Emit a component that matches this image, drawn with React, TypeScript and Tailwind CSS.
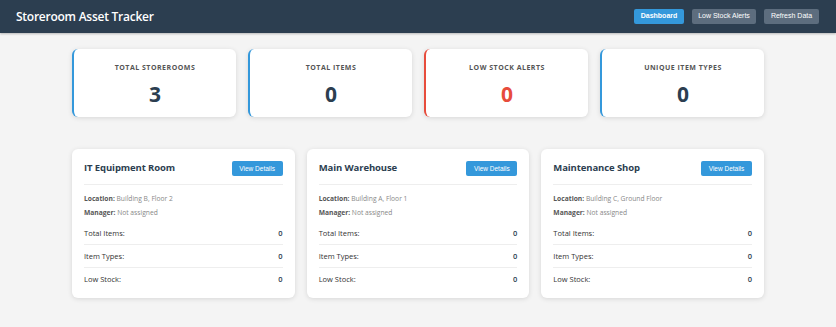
import React from "react";

const stats = [
  { label: "Total Storerooms", value: "3", danger: false },
  { label: "Total Items", value: "0", danger: false },
  { label: "Low Stock Alerts", value: "0", danger: true },
  { label: "Unique Item Types", value: "0", danger: false },
];

const rooms = [
  { name: "IT Equipment Room", location: "Building B, Floor 2" },
  { name: "Main Warehouse", location: "Building A, Floor 1" },
  { name: "Maintenance Shop", location: "Building C, Ground Floor" },
];

export default function App() {
  return (
    <div
      className="min-h-[327px] bg-[#f4f4f4]"
      style={{ fontFamily: '"Open Sans", "Noto Sans", sans-serif' }}
    >
      <header className="flex h-[33px] items-center justify-between bg-[#2c3e50] pl-4 pr-[17px] shadow-[0_1px_2px_rgba(0,0,0,0.25)]">
        <h1 className="text-[12px] font-semibold tracking-[-0.25px] text-white">Storeroom Asset Tracker</h1>
        <nav
          className="flex gap-2"
          style={{ fontFamily: '"Liberation Sans", Arial, sans-serif' }}
        >
          <button className="h-[15px] w-[50px] rounded-[2px] bg-[#3498db] text-[7px] font-bold text-white">Dashboard</button>
          <button className="h-[15px] w-[64px] rounded-[2px] bg-[#5d6d7e] text-[7px] text-white">Low Stock Alerts</button>
          <button className="h-[15px] w-[55px] rounded-[2px] bg-[#5d6d7e] text-[7px] text-white">Refresh Data</button>
        </nav>
      </header>

      <main className="mx-auto w-[692px] pt-4">
        <div className="grid grid-cols-4 gap-3">
          {stats.map((s) => (
            <div
              key={s.label}
              className={`flex h-[68px] flex-col items-center rounded-[6px] border-l-[2px] bg-white pt-[14px] shadow-[0_1px_5px_rgba(0,0,0,0.12)] ${s.danger ? "border-[#e74c3c]" : "border-[#3498db]"}`}
            >
              <div className="text-[7px] font-bold uppercase leading-[10px] tracking-[0.5px] text-[#555]">{s.label}</div>
              <div className={`mt-[9px] text-[21px] font-bold leading-[24px] ${s.danger ? "text-[#e74c3c]" : "text-[#2c3e50]"}`}>{s.value}</div>
            </div>
          ))}
        </div>

        <div className="mt-8 grid grid-cols-3 gap-3">
          {rooms.map((r) => (
            <div key={r.name} className="rounded-[6px] bg-white px-3 pb-2 pt-3 shadow-[0_1px_5px_rgba(0,0,0,0.12)]">
              <div className="flex items-center justify-between border-b border-[#eeeeee] pb-2">
                <h3 className="text-[9.5px] font-bold tracking-[-0.1px] text-[#2c3e50]">{r.name}</h3>
                <button
                  className="h-[15px] w-[51px] rounded-[2px] bg-[#3498db] text-[6.5px] text-white"
                  style={{ fontFamily: '"Liberation Sans", Arial, sans-serif' }}
                >
                  View Details
                </button>
              </div>
              <div className="mt-[9px] text-[6.7px] leading-[10px] text-[#888]">
                <p>
                  <span className="font-bold text-[#555]">Location:</span> {r.location}
                </p>
                <p className="mt-1">
                  <span className="font-bold text-[#555]">Manager:</span> Not assigned
                </p>
              </div>
              <div className="mt-[4px] text-[7.5px] text-[#333]">
                {["Total Items:", "Item Types:", "Low Stock:"].map((l, i) => (
                  <div
                    key={l}
                    className={`flex items-center justify-between py-[6px] leading-[10px] ${i < 2 ? "border-b border-[#eeeeee]" : ""}`}
                  >
                    <span>{l}</span>
                    <span className="font-semibold text-[#2c3e50]">0</span>
                  </div>
                ))}
              </div>
            </div>
          ))}
        </div>
      </main>
    </div>
  );
}
